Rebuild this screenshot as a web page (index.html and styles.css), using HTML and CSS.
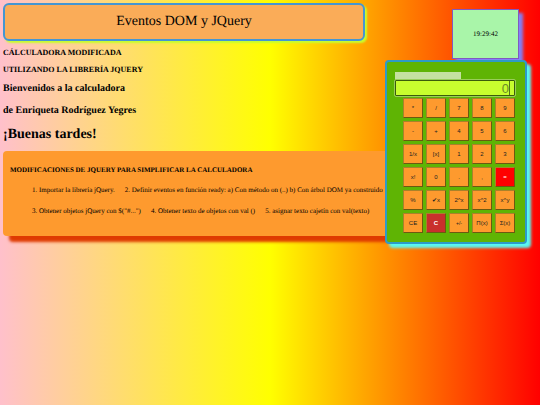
FILE: index.html
```html
<!DOCTYPE html>
<html lang="es">
<head>
<meta charset="utf-8">
<meta name="viewport" content="width=device-width, initial-scale=1">
<title>Eventos DOM y JQuery</title>
<link rel="stylesheet" href="styles.css">
</head>
<body>
<div class="page">
  <main class="content">
    <header class="banner">Eventos DOM y JQuery</header>
    <div class="intro">
      <h4 class="small-title">CÁLCULADORA MODIFICADA</h4>
      <h4 class="small-title">UTILIZANDO LA LIBRERÍA JQUERY</h4>
      <h3 class="subtitle">Bienvenidos a la calculadora</h3>
      <h3 class="subtitle">de Enriqueta Rodríguez Yegres</h3>
      <h2 class="greeting">¡Buenas tardes!</h2>
    </div>
    <section class="notes">
      <h4 class="notes-title">MODIFICACIONES DE JQUERY PARA SIMPLIFICAR LA CALCULADORA</h4>
      <div class="notes-row"><span>1. Importar la librería jQuery.</span><span>2. Definir eventos en función ready: a) Con método on (..) b) Con árbol DOM ya construido</span></div>
      <div class="notes-row"><span>3. Obtener objetos jQuery con $("#...")</span><span>4. Obtener texto de objetos con val ()</span><span>5. asignar texto cajetín con val(texto)</span></div>
    </section>
  </main>
  <aside class="side">
    <time class="clock">19:29:42</time>
    <form class="calculator">
      <input class="info" type="text" aria-label="Información" readonly>
      <div class="screen">
        <input class="display" type="text" aria-label="Pantalla" value="0" readonly>
        <span class="caret"></span>
      </div>
      <div class="keys">
        <button type="button">*</button><button type="button">/</button><button type="button">7</button><button type="button">8</button><button type="button">9</button>
        <button type="button">-</button><button type="button">+</button><button type="button">4</button><button type="button">5</button><button type="button">6</button>
        <button type="button">1/x</button><button type="button">[x]</button><button type="button">1</button><button type="button">2</button><button type="button">3</button>
        <button type="button">x!</button><button type="button">0</button><button type="button">.</button><button type="button">,</button><button type="button" class="equals">=</button>
        <button type="button">%</button><button type="button">✔x</button><button type="button">2^x</button><button type="button">x^2</button><button type="button">x^y</button>
        <button type="button">CE</button><button type="button" class="clear">C</button><button type="button" class="sign">+/-</button><button type="button">Π(x)</button><button type="button">Σ(x)</button>
      </div>
    </form>
  </aside>
</div>
</body>
</html>
```

FILE: styles.css
```css
* {
  box-sizing: border-box;
}

body {
  margin: 0;
  min-height: 100vh;
  background: linear-gradient(to right, pink, yellow 50%, red);
  font-family: "Liberation Serif", "Times New Roman", serif;
  color: #000;
  text-rendering: geometricPrecision;
}

.page {
  display: grid;
  grid-template-columns: minmax(0, 1fr) 142px;
  align-items: start;
  padding: 3px 13px 0 3px;
}

.banner {
  margin-right: 20px;
  padding: 9px;
  border: 2px solid #4596d2;
  border-radius: 6px;
  background: #faac58;
  box-shadow: 2px 2px 2px #c8fe2e;
  font-size: 14px;
  line-height: 16px;
  text-align: center;
}

.intro {
  padding: 3px 0 4px;
}

.small-title,
.subtitle,
.greeting {
  margin: 0;
}

.small-title {
  font-size: 8px;
  line-height: 17px;
}

.subtitle {
  font-size: 10px;
  line-height: 22px;
}

.greeting {
  font-size: 14px;
  line-height: 25px;
}

.notes {
  padding: 9px 7px 14px;
  border-radius: 4px 0 0 4px;
  background: #fe9a2e;
  box-shadow: 6px 6px 3px #df3a01;
  font-size: 7px;
  line-height: 21px;
}

.notes-title {
  margin: 0;
  font-size: 7px;
  line-height: 20px;
}

.notes-row {
  display: flex;
  gap: 10px;
  padding-left: 22px;
  white-space: nowrap;
}

.side {
  position: relative;
  display: flex;
  flex-direction: column;
  padding-top: 6px;
}

.clock {
  align-self: flex-end;
  width: 67px;
  margin: 0 8px 1px 0;
  border: 1px solid #8258c0;
  background: #a9f5a9;
  box-shadow: 4px 4px 3px #8181f7;
  font-size: 7px;
  line-height: 48px;
  text-align: center;
}

.calculator {
  position: relative;
  padding: 10px 10px 9px 8px;
  border: 2px solid #2e9ac8;
  border-radius: 4px;
  background: #5fb404;
  box-shadow: 4px 4px 3px #58faf4;
}

.info {
  display: block;
  width: 66px;
  height: 8px;
  padding: 0;
  border: 0;
  background: #c5e1a0;
}

.screen {
  position: relative;
  margin-bottom: 2px;
}

.display {
  display: block;
  width: 100%;
  height: 16px;
  padding: 0 5px;
  border: 1px solid #3b5c0b;
  outline: 1px solid #9acd5a;
  outline-offset: 0;
  border-radius: 1px;
  background: #c8fe2e;
  color: #6d8a2a;
  font: 13px/14px "Liberation Sans", Arial, sans-serif;
  text-align: right;
}

.caret {
  position: absolute;
  top: 1px;
  right: 5px;
  width: 1px;
  height: 14px;
  background: #56721b;
}

.keys {
  display: grid;
  grid-template-columns: repeat(5, 1fr);
  gap: 3px;
  padding-left: 8px;
}

.keys button {
  height: 20px;
  padding: 0;
  border: 1px solid;
  border-color: #a8822b #6b5a10 #6b5a10 #a8822b;
  background: #fe9a2e;
  color: #222;
  font: 6px/8px "Liberation Sans", Arial, sans-serif;
}

.keys .equals {
  background: #f00;
  color: #fff;
}

.keys .clear {
  background: #c9302c;
  color: #fff;
  font-weight: bold;
}

.keys .sign {
  font-size: 5px;
}
```
